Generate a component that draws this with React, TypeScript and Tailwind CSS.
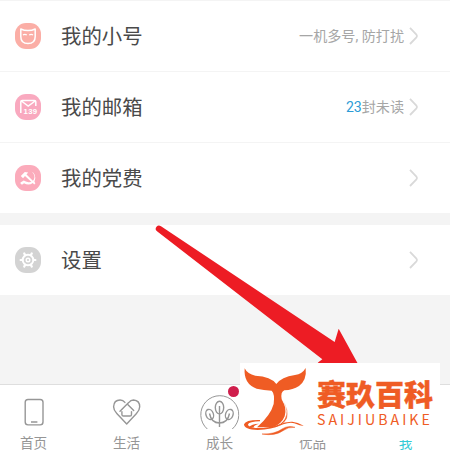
import React from 'react';

const Chevron = () => (
  <svg width="10" height="20" viewBox="0 0 10 20" fill="none" stroke="#d9d9d9" strokeWidth="1.8">
    <path d="M1 1.8 L7.4 8.6 Q8.6 10 7.4 11.4 L1 18" />
  </svg>
);

const MaskIcon = () => (
  <svg width="28" height="28" viewBox="0 0 28 28" fill="none">
    <rect x="1" y="1" width="26" height="26" rx="11" fill="#fbaea6" />
    <path d="M6.8 7 Q10 8.6 14 8.6 Q18 8.6 21.2 7 V14.5 Q21.2 21.6 14 21.6 Q6.8 21.6 6.8 14.5 Z" stroke="#fff" strokeWidth="1.5" strokeLinejoin="round" />
    <path d="M9 13 Q10.8 11.6 12.8 13 M15.2 13 Q17.2 11.6 19 13" stroke="#fff" strokeWidth="1.3" />
  </svg>
);

const MailIcon = () => (
  <svg width="28" height="28" viewBox="0 0 28 28" fill="none">
    <rect x="1" y="1" width="26" height="26" rx="11" fill="#f9a9bf" />
    <path d="M6.8 20 V8.8 Q6.8 7.4 8.2 7.4 H20.4 Q21.8 7.4 21.8 8.8 V13 M7.4 8 L14.2 13 L21.2 8" stroke="#fff" strokeWidth="1.5" />
    <text x="9.4" y="21.2" fontSize="7.8" fontWeight="700" fill="#fff" fontFamily="Liberation Sans, sans-serif" textLength="13.8">139</text>
  </svg>
);

const PartyIcon = () => (
  <svg width="28" height="28" viewBox="0 0 28 28" fill="none">
    <rect x="1" y="1" width="26" height="26" rx="11" fill="#fbabbb" />
    <path d="M15.8 6.4 Q21 9.2 20.4 14 Q19.4 18.4 14.6 18.2 Q11.6 17.8 9.8 16.6 L6.4 18.6 Q6.4 20.8 8.4 20.4 L10 19.2 Q14.6 22 18.8 19 L20.2 20.4 L21.4 19.2 L20.4 17.8 Q23.8 10.2 15.8 6.4 Z" fill="#fff" />
    <path d="M6.8 12 L10.8 8 L14.2 8.6 L12.5 10.4 L19.6 17.6 L18.3 18.8 L11 11.9 L9 14.2 Z" fill="#fff" />
  </svg>
);

const GearIcon = () => (
  <svg width="28" height="28" viewBox="0 0 28 28" fill="none">
    <rect x="1" y="1" width="26" height="26" rx="11" fill="#d3d3d3" />
    <circle cx="14" cy="14" r="5.3" stroke="#fff" strokeWidth="1.9" />
    <circle cx="14" cy="14" r="1.8" stroke="#fff" strokeWidth="1.4" />
    <path d="M19.5 14 H21.4 M8.5 14 H6.6 M16.8 9.2 L17.8 7.4 M11.2 9.2 L10.2 7.4 M16.8 18.8 L17.8 20.6 M11.2 18.8 L10.2 20.6" stroke="#fff" strokeWidth="2.2" strokeLinecap="round" />
  </svg>
);

const PhoneIcon = () => (
  <svg width="40" height="40" viewBox="0 0 40 40" fill="none" stroke="#969696" strokeWidth="1.4">
    <rect x="11.7" y="7.5" width="17.8" height="25.4" rx="2.8" />
    <path d="M17.5 30 H23.9" strokeWidth="1.5" />
  </svg>
);

const HeartIcon = () => (
  <svg width="40" height="40" viewBox="0 0 40 40" fill="none" stroke="#969696" strokeWidth="1.4" strokeLinecap="round" strokeLinejoin="round">
    <path d="M13.5 19.2 L22.2 10.6 Q24.2 8 27 8 Q33.2 8.4 33.2 14.8 Q33.2 18.2 30 21.6 L20.2 32 L10.3 21.6 Q7.1 18.2 7.1 14.8 Q7.4 8 13.6 8 Q16.6 8 18.4 10.4" />
    <path d="M21.2 12.5 L27.2 18.6 M15.4 19.6 V22.4 Q15.4 24 17 24 H23.4 Q25 24 25 22.4 V19.6" />
  </svg>
);

const PlantIcon = () => (
  <svg width="40" height="40" viewBox="0 0 40 40" fill="none" stroke="#969696">
    <path d="M7.8 37 A19 19 0 1 1 32.8 37" strokeWidth="1" />
    <g strokeWidth="1.4">
      <ellipse cx="20" cy="15.6" rx="4.2" ry="6.3" />
      <ellipse cx="10.2" cy="22.4" rx="3.7" ry="5.2" transform="rotate(-20 10.2 22.4)" />
      <ellipse cx="29.8" cy="22.4" rx="3.7" ry="5.2" transform="rotate(20 29.8 22.4)" />
      <path d="M20 14 V35 M10 21.5 Q11.8 31 20 31 Q28.2 31 30 21.5" />
    </g>
  </svg>
);

const TailLogo = () => (
  <svg className="absolute -left-[5px] -top-[8px]" width="90" height="90" viewBox="0 0 270 270" fill="none">
    <path
      d="M29 40 Q37 57 61 62 Q108 64 124 87 Q139 66 180 60 Q202 57 212 39 Q216 75 192 93 Q174 105 148 106 Q136 111 140 133 Q157 160 149 184 Q140 207 114 217 L66 217 Q107 181 116 147 Q120 116 110 107 Q86 106 65 101 Q25 87 29 40 Z"
      fill="#ef5c24"
    />
    <path d="M144 137 Q162 169 149 192 Q137 211 110 219 Q146 213 156 190 Q163 165 144 137 Z" fill="#ef5c24" stroke="#fff" strokeWidth="1.5" />
    <path
      d="M75 195 Q32 194 27 208 Q27 224 68 225 Q108 225 145 208 Q170 199 186 208 Q195 213 206 212 Q188 201 172 200 Q153 199 130 209 Q94 221 61 219 Q38 216 39 208 Q43 200 75 199 Z"
      fill="#ef5c24"
    />
    <path d="M40 218 Q50 206 72 206 Q53 212 57 217 Z" fill="#ef5c24" />
    <path d="M81 237 Q119 238 141 222 Q159 210 180 217 Q160 215 144 227 Q120 244 81 237 Z" fill="#ef5c24" stroke="#ef5c24" strokeWidth="1.5" />
  </svg>
);

interface RowProps {
  icon: React.ReactNode;
  label: string;
  hint?: React.ReactNode;
}

const Row: React.FC<RowProps> = ({ icon, label, hint }) => (
  <div className="flex h-[70px] shrink-0 items-center bg-white pl-[14px] pr-[31px]">
    {icon}
    <span className="ml-[19px] pt-[2px] text-[20.4px] leading-none text-[#4a4a4a]">{label}</span>
    <span className="ml-auto mr-[5px] pt-px text-[14.1px] leading-none text-[#a6a6a6]">{hint}</span>
    <Chevron />
  </div>
);

const tabs = [
  { label: '首页', icon: <PhoneIcon /> },
  { label: '生活', icon: <HeartIcon /> },
  { label: '成长', icon: <PlantIcon />, badge: true },
  { label: '优品', icon: null },
  { label: '我', icon: null, active: true },
];

export default function App() {
  return (
    <div className="relative flex h-[450px] w-[450px] flex-col overflow-hidden bg-[#f4f4f4] font-['Roboto','Noto_Sans_CJK_SC',sans-serif]">
      <div className="flex flex-col gap-px pt-px">
        <Row icon={<MaskIcon />} label="我的小号" hint="一机多号, 防打扰" />
        <Row
          icon={<MailIcon />}
          label="我的邮箱"
          hint={
            <>
              <span className="text-[#2c9bd6]">23</span>封未读
            </>
          }
        />
        <Row icon={<PartyIcon />} label="我的党费" />
      </div>
      <div className="mt-[12px]">
        <Row icon={<GearIcon />} label="设置" />
      </div>

      <nav className="-ml-[13px] mt-auto flex h-[66px] w-[465px] shrink-0 border-t border-[#dedede] bg-white">
        {tabs.map((tab) => (
          <div key={tab.label} className="relative flex w-[93px] shrink-0 flex-col items-center pt-[7px]">
            <div className="h-10 w-10 -translate-x-[0.5px]">{tab.icon}</div>
            {tab.badge && <span className="absolute left-[55px] top-px h-[11px] w-[11px] rounded-full bg-[#cf1e4c]" />}
            <span className={tab.active ? 'mt-[4px] text-[13.6px] leading-[14px] text-[#35cbd6]' : 'mt-[4px] text-[13.6px] leading-[14px] text-[#969696]'}>
              {tab.label}
            </span>
          </div>
        ))}
      </nav>

      <svg className="absolute left-[150px] top-[215px]" width="220" height="160" viewBox="0 0 660 480">
        <path d="M33 34 L554 381 L566 341 L622 443 L650 480 L503 443 L517 433 L21 49 A9 9 0 0 1 33 34 Z" fill="#ed1c24" />
      </svg>

      <div className="absolute left-[240px] top-[363px] h-[77px] w-[200px] bg-white">
        <TailLogo />
        <div className="flex flex-col pl-[77px] pt-[15px] text-[#ef5c24]">
          <span className="whitespace-nowrap font-['Noto_Sans_CJK_SC',sans-serif] text-[29px] font-black leading-[30px] [-webkit-text-stroke:0.4px_#ef5c24]">赛玖百科</span>
          <span className="mt-[4px] whitespace-nowrap font-['Noto_Sans_CJK_SC',sans-serif] text-[14.2px] leading-[14px] tracking-[3px]">SAIJIUBAIKE</span>
        </div>
      </div>
    </div>
  );
}
